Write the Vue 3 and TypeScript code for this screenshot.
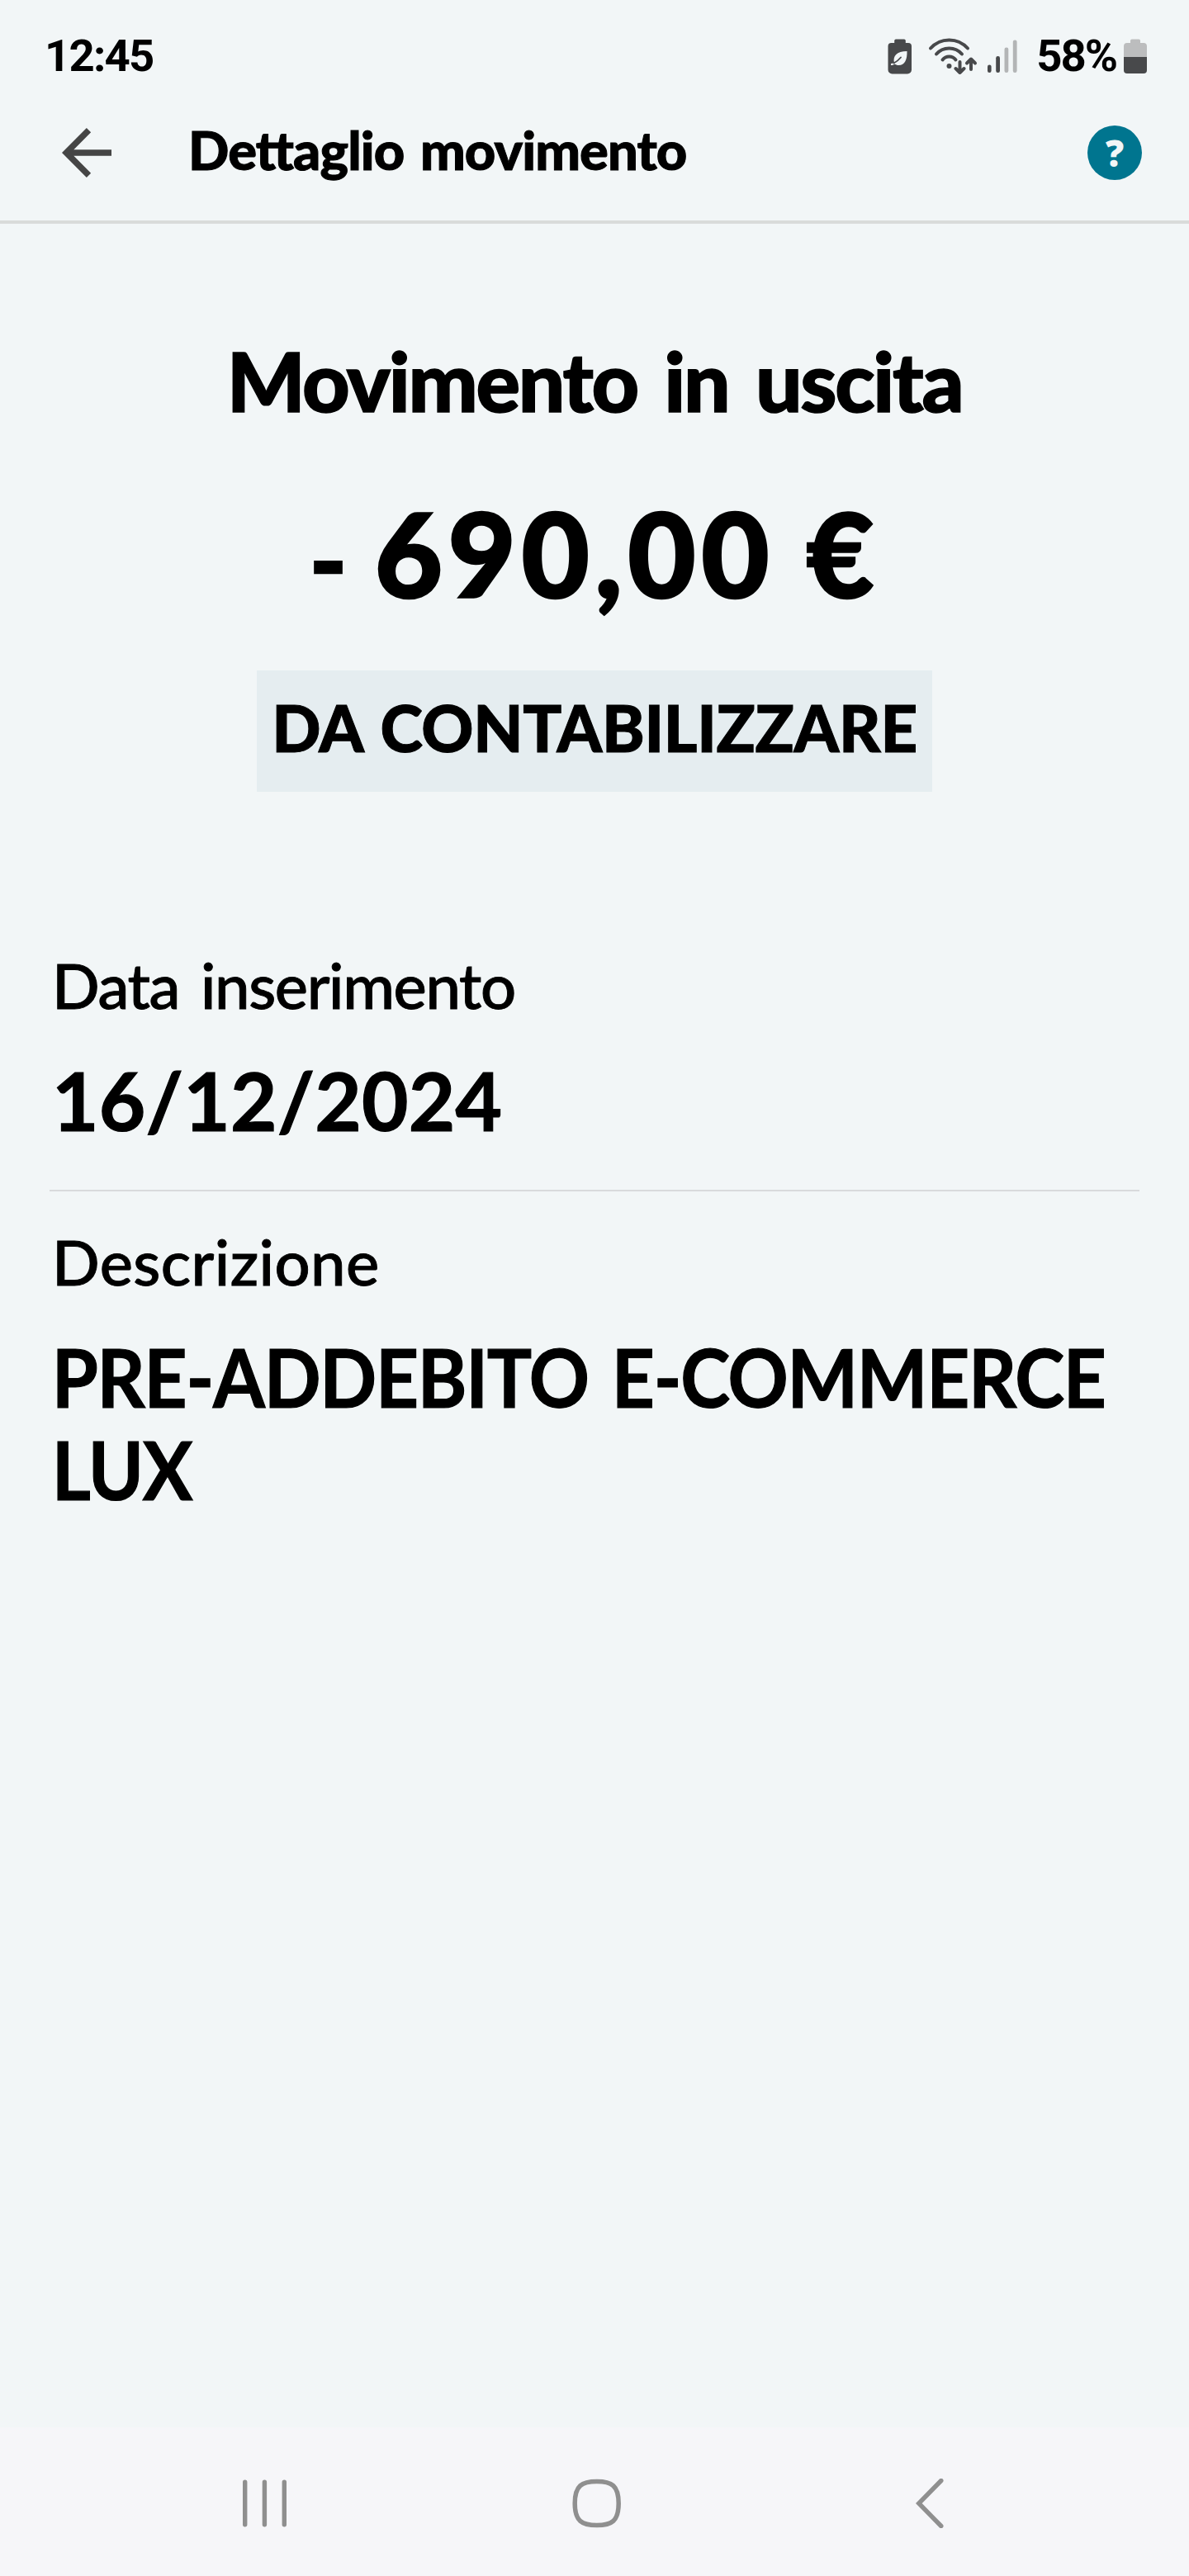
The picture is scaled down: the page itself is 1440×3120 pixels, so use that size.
<script setup lang="ts">
interface Detail {
  kind: 'date' | 'description'
  label: string
  value: string
}

const time = '12:45'
const battery = '58%'
const details: Detail[] = [
  { kind: 'date', label: 'Data inserimento', value: '16/12/2024' },
  { kind: 'description', label: 'Descrizione', value: 'PRE-ADDEBITO E-COMMERCE LUX' },
]
</script>

<template>
  <div class="screen">
    <div class="status">
      <span class="clock">{{ time }}</span>
      <div class="indicators">
        <svg class="eco" width="30" height="44" viewBox="0 0 30 44">
          <path fill="#48494b" d="M10 1.5h10a1.8 1.8 0 0 1 1.8 1.8V6H25a4 4 0 0 1 4 4v28.500a5 5 0 0 1-5 5H5.500a5 5 0 0 1-5-5V10a4 4 0 0 1 4-4h3.700V3.300A1.800 1.800 0 0 1 10 1.500z" />
          <path fill="#f2f6f7" d="M23.500 16c.3 10-2.500 17-10 17-2.200 0-3.800-.6-5-1.500C7 32.600 5.500 33 4 33v-2c1.500 0 2.800-.3 4-1C6 22 11 16 23.500 16z" />
          <path fill="none" stroke="#48494b" stroke-width="1.800" stroke-linecap="round" d="M7.500 30.500c3-1.500 6-4 8.500-7" />
        </svg>
        <svg class="wifi" width="60" height="44" viewBox="0 0 60 44">
          <g fill="none" stroke="#48494b" stroke-width="4" stroke-linecap="round" stroke-linejoin="round">
            <path d="M3 12.500C15-1 36-1 48 12.500" />
            <path d="M10 19.500c8-9.500 23-9.500 31 0" />
            <path d="M17.500 26.500c4-5.500 12-5.500 16 0" />
            <path d="M38.500 29v13M33.500 37l5 5 5-5" />
            <path d="M52 38V25.500M47 30.500l5-5 5 5" />
          </g>
          <circle cx="25.500" cy="34" r="3" fill="#48494b" />
        </svg>
        <svg class="signal" width="38" height="44" viewBox="0 0 38 44">
          <rect x="1" y="32.500" width="4.600" height="9.500" rx="2.300" fill="#48494b" />
          <rect x="11.200" y="22" width="4.800" height="20" rx="2.300" fill="#48494b" />
          <rect x="21.500" y="11.500" width="4.800" height="30.500" rx="2.300" fill="#b3b5b6" />
          <rect x="31.800" y="2.500" width="4.800" height="39.500" rx="2.300" fill="#b3b5b6" />
        </svg>
        <span class="percent">{{ battery }}</span>
        <svg width="28" height="44" viewBox="0 0 28 44">
          <path fill="#bcbdbe" d="M9.800 1.500h8.400A1.800 1.800 0 0 1 20 3.300V6h4a4 4 0 0 1 4 4v13H0V10a4 4 0 0 1 4-4h4V3.300a1.800 1.800 0 0 1 1.800-1.800z" />
          <path fill="#48494b" d="M0 23h28v16a4 4 0 0 1-4 4H4a4 4 0 0 1-4-4z" />
        </svg>
      </div>
    </div>

    <header class="bar">
      <svg class="back" width="60" height="60" viewBox="0 0 60 60" fill="none" stroke="#454545" stroke-width="7.500">
        <path d="M60 30H6M32.500 2.700 5.200 30l27.300 27.300" />
      </svg>
      <h1 class="title">Dettaglio movimento</h1>
      <button class="help" aria-label="Aiuto">?</button>
    </header>

    <main class="content">
      <h2 class="kind">Movimento in uscita</h2>
      <p class="amount"><span class="sign">-</span> 690,00 €</p>
      <span class="badge">DA CONTABILIZZARE</span>

      <dl class="details">
        <div v-for="item in details" :key="item.kind" class="detail" :class="item.kind">
          <dt>{{ item.label }}</dt>
          <dd>{{ item.value }}</dd>
        </div>
      </dl>
    </main>

    <nav class="nav">
      <svg width="60" height="60" viewBox="0 0 60 60" stroke="#8f8f8f" stroke-width="5.400" stroke-linecap="round">
        <path d="M6.700 4.200v51.600M30.400 4.200v51.600M54.300 4.200v51.600" />
      </svg>
      <svg width="60" height="60" viewBox="0 0 60 60" fill="none" stroke="#8f8f8f" stroke-width="5.500">
        <path d="M29.800 3.400c18 0 26.400 5 26.400 26.600S47.800 56.600 29.800 56.600 3.200 51.600 3.200 30 11.800 3.400 29.800 3.400z" />
      </svg>
      <svg width="60" height="60" viewBox="0 0 60 60" fill="none" stroke="#8f8f8f" stroke-width="5.400" stroke-linecap="round">
        <path d="M43.800 2.500 16.800 30l27 27.500" />
      </svg>
    </nav>
  </div>
</template>

<style>
body {
  margin: 0;
}
</style>

<style scoped>
.screen {
  display: flex;
  flex-direction: column;
  width: 1440px;
  height: 3120px;
  background: #f2f6f7;
  color: #000;
  font-family: 'Lato', 'Liberation Sans', sans-serif;
}

.status {
  box-sizing: border-box;
  display: flex;
  align-items: center;
  justify-content: space-between;
  height: 136px;
  padding: 0 51px 0 54px;
  font-family: 'Roboto', sans-serif;
  font-weight: 700;
}

.clock,
.percent {
  padding-bottom: 3px;
  font-size: 54.5px;
  line-height: 64px;
}

.clock {
  letter-spacing: -1.8px;
}

.indicators {
  display: flex;
  align-items: center;
}

.wifi {
  margin-left: 19px;
}

.signal {
  margin-left: 11px;
}

.percent {
  margin: 0 9px 0 22px;
  letter-spacing: -2px;
}

.bar {
  box-sizing: border-box;
  display: flex;
  align-items: center;
  height: 135px;
  padding: 0 57px 33px 75px;
  border-bottom: 4px solid #d9dbda;
}

.title {
  flex: 1;
  margin: 0 0 0 93px;
  padding-bottom: 8px;
  font-size: 65px;
  line-height: 78px;
  font-weight: 900;
  letter-spacing: -0.9px;
  word-spacing: 5px;
  font-feature-settings: 'liga' 1;
  -webkit-text-stroke: 1px #000;
}

.help {
  width: 66px;
  height: 66px;
  padding: 0;
  border: 0;
  border-radius: 50%;
  background: #00758f;
  color: #f2f6f7;
  font: 800 44px/64px 'Open Sans', sans-serif;
}

.content {
  flex: 1;
  display: flex;
  flex-direction: column;
  align-items: center;
  padding: 129px 60px 0;
}

.kind {
  margin: 0;
  font-size: 100px;
  line-height: 120px;
  font-weight: 900;
  letter-spacing: -2.3px;
  word-spacing: 11px;
  white-space: nowrap;
  -webkit-text-stroke: 1.5px #000;
}

.amount {
  margin: 64px 0 0;
  font-size: 142px;
  line-height: 170px;
  font-weight: 900;
  letter-spacing: 6.5px;
  word-spacing: -2px;
  white-space: nowrap;
  -webkit-text-stroke: 2.5px #000;
}

.sign {
  font-size: 122px;
  line-height: 1;
  letter-spacing: -5px;
}

.badge {
  box-sizing: border-box;
  display: flex;
  justify-content: center;
  width: 818px;
  height: 147px;
  margin-top: 58px;
  background: #e5edf0;
  font-size: 78px;
  line-height: 138px;
  font-weight: 900;
  letter-spacing: -0.3px;
  word-spacing: 4px;
  white-space: nowrap;
  -webkit-text-stroke: 1px #000;
}

.details {
  align-self: stretch;
  margin: 188px 0 0;
}

.detail + .detail {
  margin-top: 52px;
  padding-top: 39px;
  border-top: 2px solid #d9dadc;
}

dt {
  padding-left: 3px;
  font-size: 76px;
  line-height: 92px;
  font-weight: 500;
  -webkit-text-stroke: 0.9px #000;
}

.date dt {
  letter-spacing: -1.4px;
  word-spacing: 8px;
}

.description dt {
  letter-spacing: 0.4px;
}

dd {
  margin: 38px 0 0;
  padding-left: 3px;
  font-size: 97.5px;
  line-height: 112px;
  font-weight: 700;
  -webkit-text-stroke: 1.2px #000;
}

.date dd {
  letter-spacing: 0.2px;
}

/* Long uppercase descriptions are set slightly condensed */
.description dd {
  width: 1416px;
  letter-spacing: -1.4px;
  word-spacing: 8px;
  transform: scaleX(0.93);
  transform-origin: left;
}

.nav {
  box-sizing: border-box;
  display: flex;
  align-items: center;
  gap: 343px;
  height: 180px;
  padding: 3px 0 0 290px;
  background: #f6f6f9;
}
</style>
